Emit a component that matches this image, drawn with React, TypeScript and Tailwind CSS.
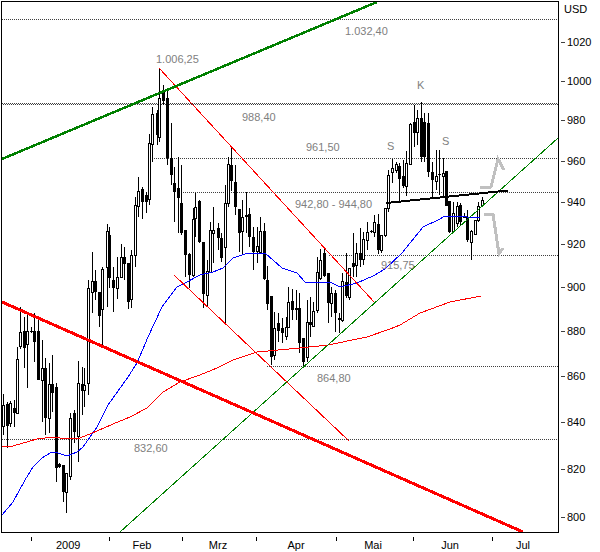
// Gold chart, 2009. Every candle was read off the picture, in crops scaled 3x.
type Candle = [number, number, number, number, number, number];

const seg = (ox: number, oy: number, rows: Candle[]) =>
  rows.map(([x, hi, lo, top, bot, filled]) => ({
    x: Math.round(ox + x / 3),
    hi: Math.round(oy + hi / 3),
    lo: Math.round(oy + lo / 3),
    top: Math.round(oy + top / 3),
    bot: Math.round(oy + bot / 3),
    filled: filled === 1,
  }));

const candles = [
  ...seg(0, 280, [
    [8, 342, 465, 375, 438, 0], [20, 365, 505, 372, 437, 1], [29, 362, 440, 368, 428, 0],
    [41, 360, 440, 385, 398, 1], [50, 200, 400, 238, 398, 0], [61, 82, 207, 157, 197, 0],
    [73, 110, 265, 153, 205, 1], [82, 100, 323, 153, 193, 0], [94, 140, 160, 153, 157, 1],
    [103, 100, 245, 153, 185, 1], [115, 115, 300, 153, 300, 1], [125, 180, 425, 265, 300, 0],
    [136, 235, 465, 265, 415, 1], [147, 250, 460, 313, 413, 0], [157, 225, 395, 313, 340, 1],
    [169, 310, 605, 320, 563, 1], [178, 550, 565, 553, 560, 1], [190, 555, 665, 555, 635, 1],
    [199, 580, 700, 580, 635, 0], [211, 400, 600, 415, 587, 0], [223, 390, 490, 400, 455, 1],
    [233, 243, 545, 310, 467, 0], [245, 260, 405, 313, 333, 1], [253, 265, 380, 315, 330, 0],
    [265, 0, 345, 25, 310, 0],
  ]),
  ...seg(0, 60, [
    [276, 575, 760, 663, 695, 0], [286, 630, 720, 663, 695, 1], [298, 695, 800, 695, 767, 1],
    [307, 620, 855, 628, 748, 0], [320, 492, 740, 513, 622, 0], [328, 500, 685, 525, 655, 1],
    [340, 620, 755, 660, 683, 1], [352, 590, 718, 652, 683, 0], [362, 553, 650, 590, 650, 0],
    [373, 560, 660, 590, 613, 1], [383, 610, 748, 610, 725, 1], [394, 570, 745, 585, 718, 0],
    [404, 410, 620, 435, 585, 0], [415, 350, 470, 393, 438, 0], [427, 380, 478, 388, 425, 1],
    [437, 395, 460, 405, 425, 1], [448, 222, 435, 250, 418, 0], [457, 140, 305, 163, 253, 0],
    [470, 150, 255, 160, 225, 1], [478, 25, 245, 115, 230, 0], [490, 75, 135, 92, 122, 1],
    [502, 90, 315, 115, 295, 1], [512, 190, 375, 295, 345, 1], [523, 320, 485, 368, 395, 1],
    [533, 290, 520, 385, 415, 1], [544, 315, 525, 430, 520, 1], [556, 510, 650, 510, 585, 1],
    [566, 580, 685, 583, 645, 1], [578, 445, 650, 477, 645, 0], [586, 398, 530, 440, 475, 0],
    [598, 420, 550, 423, 547, 1], [608, 545, 745, 545, 703, 1], [620, 600, 738, 633, 705, 0],
    [630, 485, 640, 510, 635, 0], [640, 440, 610, 510, 520, 0], [653, 490, 570, 505, 535, 1],
    [663, 520, 605, 535, 593, 1], [674, 375, 795, 428, 560, 0], [683, 290, 440, 313, 430, 0],
    [694, 262, 392, 315, 362, 1], [706, 315, 465, 367, 440, 1], [716, 447, 575, 447, 518, 1],
    [727, 420, 585, 470, 512, 0], [737, 395, 520, 466, 470, 1], [748, 445, 560, 463, 530, 1],
    [758, 500, 630, 530, 575, 1], [770, 500, 610, 558, 573, 0], [780, 470, 580, 513, 575, 0],
  ]),
  ...seg(200, 90, [
    [191, 400, 570, 423, 567, 1], [202, 528, 660, 570, 643, 1], [212, 617, 825, 617, 800, 1],
    [222, 665, 810, 715, 795, 0], [235, 670, 757, 700, 722, 1], [245, 685, 760, 715, 730, 1],
    [257, 680, 750, 712, 737, 0], [265, 592, 715, 635, 712, 0], [277, 597, 690, 633, 660, 1],
    [287, 600, 690, 655, 660, 1], [298, 610, 790, 655, 760, 1], [309, 745, 830, 745, 815, 1],
    [320, 630, 815, 697, 800, 0], [331, 620, 740, 695, 705, 1], [340, 635, 710, 663, 708, 0],
    [352, 500, 670, 545, 660, 0], [361, 478, 570, 510, 565, 0], [373, 478, 560, 490, 558, 1],
    [385, 548, 700, 548, 640, 1], [394, 590, 680, 608, 640, 0], [405, 600, 725, 608, 670, 1],
    [416, 670, 730, 683, 690, 1], [427, 550, 695, 573, 690, 0], [437, 490, 625, 575, 618, 1],
    [448, 535, 630, 535, 622, 0], [460, 430, 560, 520, 530, 1], [469, 460, 560, 490, 525, 0],
    [479, 415, 530, 490, 510, 1], [490, 425, 525, 447, 508, 0], [501, 395, 480, 427, 450, 0],
  ]),
  ...seg(370, 70, [
    [3, 480, 490, 484, 487, 1], [13, 435, 500, 455, 487, 0], [25, 433, 553, 463, 540, 1],
    [33, 495, 548, 495, 540, 0], [45, 415, 500, 415, 495, 0], [53, 300, 425, 315, 415, 0],
    [67, 268, 340, 295, 307, 0], [78, 275, 310, 283, 300, 0], [87, 280, 395, 288, 328, 1],
    [100, 270, 355, 318, 347, 1], [108, 243, 378, 280, 347, 0], [120, 160, 285, 163, 283, 0],
    [131, 105, 230, 157, 190, 1], [141, 120, 225, 145, 187, 0], [153, 97, 275, 145, 260, 1],
    [163, 130, 275, 155, 260, 1], [175, 130, 320, 160, 305, 1], [185, 275, 385, 305, 330, 1],
    [197, 240, 360, 317, 333, 0], [206, 240, 375, 313, 316, 1], [218, 265, 385, 310, 318, 0],
    [229, 303, 407, 303, 407, 1], [238, 393, 490, 393, 485, 1], [250, 395, 490, 430, 483, 0],
    [260, 395, 470, 408, 460, 0], [271, 400, 465, 405, 455, 1], [281, 430, 445, 440, 443, 1],
    [292, 420, 515, 440, 510, 1], [304, 480, 570, 483, 517, 0], [314, 450, 495, 450, 492, 0],
    [325, 395, 455, 408, 450, 0], [335, 380, 410, 390, 405, 0],
  ]),
];

// dotted price levels; the 988,40 one is two rows with the dots offset
const levels = [
  { y: 19.5, from: 2, off: 0 },
  { y: 103.5, from: 2, off: 0 },
  { y: 104.5, from: 2, off: 1 },
  { y: 158.5, from: 152, off: 0 },
  { y: 192.5, from: 181, off: 0 },
  { y: 255.5, from: 329, off: 0 },
  { y: 366.5, from: 267, off: 0 },
  { y: 439.5, from: 2, off: 0 },
];

const notes = [
  { t: '1.032,40', x: 345, y: 35 },
  { t: '1.006,25', x: 156, y: 63 },
  { t: '988,40', x: 242, y: 121 },
  { t: '961,50', x: 306, y: 151 },
  { t: 'S', x: 387, y: 150 },
  { t: 'K', x: 417, y: 89 },
  { t: 'S', x: 442, y: 145 },
  { t: '942,80 - 944,80', x: 295, y: 208 },
  { t: '915,75', x: 381, y: 269 },
  { t: '864,80', x: 317, y: 382 },
  { t: '832,60', x: 134, y: 452 },
];

const blue =
  '2,515 13,502 25,480 33,467 42,458 52,452 58,453 67,456 77,452 83,447 97,427 108,405 128,377 137,363 148,337 162,307 177,287 185,283 200,275 213,272 223,268 233,258 248,253 265,253 282,268 297,273 305,282 315,283 330,282 340,287 357,283 373,276 385,269 402,253 423,227 438,220 445,216 467,217 480,218';
const redSlow =
  '2,447 13,446 37,439 53,437 67,439 80,438 97,431 113,424 130,417 147,408 163,392 180,382 200,375 217,368 233,360 257,352 300,348 328,345 367,337 390,329 400,325 420,313 450,302 481,296';

const yTicks = [
  { v: 1020, y: 42 }, { v: 1000, y: 81 }, { v: 980, y: 120 }, { v: 960, y: 161 },
  { v: 940, y: 202 }, { v: 920, y: 244 }, { v: 900, y: 287 }, { v: 880, y: 331 },
  { v: 860, y: 376 }, { v: 840, y: 422 }, { v: 820, y: 469 }, { v: 800, y: 517 },
];

const months = [
  { tick: 31, label: '2009', c: 68 }, { tick: 109, label: 'Feb', c: 142 },
  { tick: 182, label: 'Mrz', c: 218 }, { tick: 256, label: 'Apr', c: 296 },
  { tick: 336, label: 'Mai', c: 373 }, { tick: 413, label: 'Jun', c: 450 },
  { tick: 492, label: 'Jul', c: 523 },
];

function Plot() {
  return (
    <svg width={556} height={530} viewBox="2 2 556 530" className="block">
      <g shapeRendering="crispEdges">
        {levels.map((l) => (
          <line
            key={l.y}
            x1={l.from}
            x2={558}
            y1={l.y}
            y2={l.y}
            stroke="#404040"
            strokeDasharray="1 1"
            strokeDashoffset={l.off}
          />
        ))}
        {candles.map((c, i) => (
          <g key={i}>
            <line x1={c.x + 0.5} x2={c.x + 0.5} y1={c.hi} y2={c.lo} stroke="#000" />
            {c.filled ? (
              <rect x={c.x - 1} y={c.top} width={3} height={Math.max(c.bot - c.top, 1)} fill="#000" />
            ) : (
              <rect x={c.x - 0.5} y={c.top + 0.5} width={2} height={Math.max(c.bot - c.top, 1)} fill="#fff" stroke="#000" />
            )}
          </g>
        ))}
        <polyline points={blue} fill="none" stroke="#0000ff" />
        <polyline points={redSlow} fill="none" stroke="#ff0000" />
        <line x1={159} y1={68} x2={375} y2={303} stroke="#ff0000" />
        <line x1={174} y1={275} x2={349} y2={441} stroke="#ff0000" />
        <line x1={120} y1={532} x2={558} y2={138} stroke="#008000" />
        <line x1={2} y1={159} x2={377} y2={2} stroke="#008000" strokeWidth={2.5} />
        <line x1={2} y1={302} x2={523} y2={532} stroke="#ff0000" strokeWidth={3} />
        <line x1={386} y1={203} x2={508} y2={190.5} stroke="#000" strokeWidth={2} />
        <polyline points="480,188 491,187 498,159 504,170" fill="none" stroke="#c0c0c0" strokeWidth={3} />
        <polyline points="484,214 493,214 499,254 503,248" fill="none" stroke="#c0c0c0" strokeWidth={3} />
      </g>
      {notes.map((n) => (
        <text key={n.t + n.x} x={n.x} y={n.y} fill="#808080" fontSize={11} fontFamily="Liberation Sans, sans-serif">
          {n.t}
        </text>
      ))}
    </svg>
  );
}

export default function App() {
  return (
    <div className="w-[600px] h-[552px] bg-white overflow-hidden text-[11px] leading-[14px] text-black font-['Liberation_Sans',sans-serif]">
      <div className="flex">
        <div className="ml-px mt-px w-[558px] h-[532px] border border-black">
          <Plot />
        </div>
        <div className="flex flex-col mt-px pl-[2px]">
          <div className="pl-[3px] mt-px h-[14px]">USD</div>
          {yTicks.map((t, i) => (
            <div
              key={t.v}
              className="flex items-center h-[14px]"
              style={{ marginTop: t.y - (i === 0 ? 9 : yTicks[i - 1].y) - 14 }}
            >
              <span className="w-[4px] h-px bg-[#404040] mr-[2px]" />
              {t.v}
            </div>
          ))}
        </div>
      </div>
      <div className="flex">
        {months.map((m, i) => (
          <div key={m.label} className="flex">
            <div
              className="w-px h-[4px] mt-[4px] bg-black"
              style={{ marginLeft: m.tick - (i === 0 ? 0 : months[i - 1].c + 12) }}
            />
            <div className="w-[24px] mt-[5px] text-center" style={{ marginLeft: m.c - 12 - m.tick - 1 }}>
              {m.label}
            </div>
          </div>
        ))}
      </div>
    </div>
  );
}
